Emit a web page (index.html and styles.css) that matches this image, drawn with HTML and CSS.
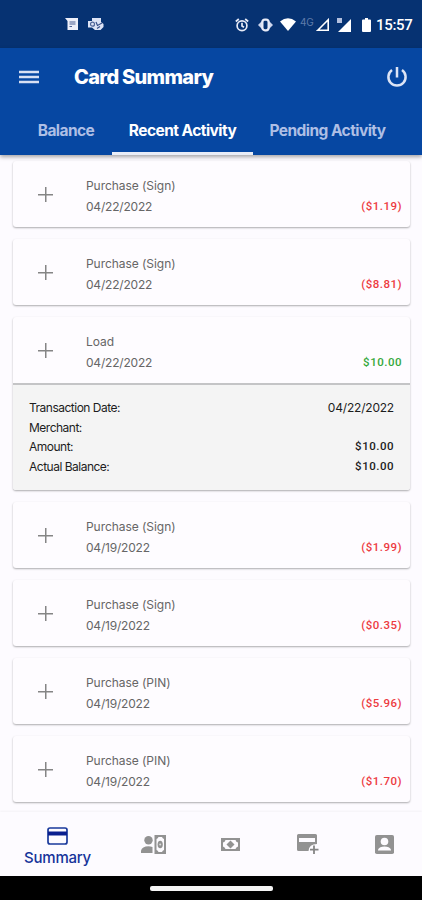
FILE: index.html
```html
<!DOCTYPE html>
<html lang="en">
<head>
    <meta charset="UTF-8">
    <meta name="viewport" content="width=device-width, initial-scale=1">
    <title>Card Summary</title>
    <link rel="stylesheet" href="styles.css">
</head>
<body>
    <div class="status-bar">
        <div class="notifications">
            <svg width="14" height="13" viewBox="0 0 14 13"><path fill="#eef0fa" d="M0 0h13v12H2.500V3z"/><path stroke="#4a5f92" stroke-width="1.200" d="M4.500 4h6M4.500 6h6M4.500 8.500h2.500"/></svg>
            <svg width="16" height="13" viewBox="0 0 16 13"><path fill="#dde3f5" d="M4 0h9v4l2.500 2v3l-3 3H7L4 9.500H0V3h4z"/><circle cx="4.500" cy="6.200" r="2" fill="none" stroke="#506699" stroke-width="1.200"/><path fill="none" stroke="#385089" stroke-width="1.200" d="M8 4l1.500 3.500L14 5M9 10.500l3-2"/></svg>
        </div>
        <svg class="alarm" width="14" height="14" viewBox="0 0 14 14"><g fill="none" stroke="#e8ebf7" stroke-width="1.700"><circle cx="7" cy="7.700" r="4.900"/><path d="M.8 3.500L3.800 1M13.200 3.500l-3-2.500M7 4.700V8l2 1.300"/></g></svg>
        <svg class="vibrate" width="15" height="14" viewBox="0 0 15 14"><path fill="#cdd6ee" d="M0 7l4-4v8zM15 7l-4-4v8z"/><rect x="4.400" y="1.700" width="6.200" height="10.600" rx="2.500" fill="none" stroke="#e8ebf7" stroke-width="2.200"/></svg>
        <svg class="wifi" width="16" height="13" viewBox="0 0 16 13"><path fill="#fff" d="M0 3.500Q8-3 16 3.500L8 13z"/></svg>
        <span class="network">4G</span>
        <svg class="signal" width="13" height="13" viewBox="0 0 13 13"><path fill="none" stroke="#fff" stroke-width="1.600" d="M1.800 12.200L12.200 1.800v10.400z"/></svg>
        <svg class="signal-two" width="15" height="14" viewBox="0 0 15 14"><path fill="#fff" d="M1 14L14 1v13z"/><path fill="#b4c0de" d="M0 0h5v5H0z"/></svg>
        <svg class="battery" width="9" height="14" viewBox="0 0 9 14"><path fill="#fff" d="M3 0h3v1.500h2q1 0 1 1V13q0 1-1 1H1q-1 0-1-1V2.500q0-1 1-1h2z"/></svg>
        <span class="clock">15:57</span>
    </div>

    <header class="header">
        <div class="title-row">
            <svg width="20" height="14" viewBox="0 0 20 14"><path stroke="#d8e0f3" stroke-width="2.400" d="M0 2h20M0 7h20M0 12h20"/></svg>
            <h1>Card Summary</h1>
            <svg width="22" height="22" viewBox="0 0 22 22"><path fill="none" stroke="#dce4f5" stroke-width="2.500" d="M11 1v10.500M6 4a8.600 8.600 0 1 0 10 0"/></svg>
        </div>
        <nav class="tabs">
            <a class="tab tab-balance">Balance</a>
            <a class="tab tab-recent active">Recent Activity</a>
            <a class="tab tab-pending">Pending Activity</a>
        </nav>
    </header>

    <main class="activity">
        <div class="card">
            <div class="row">
                <span class="plus"></span>
                <div class="info"><p>Purchase (Sign)</p><p class="date">04/22/2022</p></div>
                <span class="amount">($1.19)</span>
            </div>
        </div>
        <div class="card">
            <div class="row">
                <span class="plus"></span>
                <div class="info"><p>Purchase (Sign)</p><p class="date">04/22/2022</p></div>
                <span class="amount">($8.81)</span>
            </div>
        </div>
        <div class="card">
            <div class="row">
                <span class="plus"></span>
                <div class="info"><p>Load</p><p class="date">04/22/2022</p></div>
                <span class="amount credit">$10.00</span>
            </div>
            <div class="details">
                <div class="line"><span>Transaction Date:</span><span class="detail-date">04/22/2022</span></div>
                <div class="line"><span>Merchant:</span></div>
                <div class="line"><span>Amount:</span><span class="value">$10.00</span></div>
                <div class="line"><span>Actual Balance:</span><span class="value">$10.00</span></div>
            </div>
        </div>
        <div class="card">
            <div class="row">
                <span class="plus"></span>
                <div class="info"><p>Purchase (Sign)</p><p class="date">04/19/2022</p></div>
                <span class="amount">($1.99)</span>
            </div>
        </div>
        <div class="card">
            <div class="row">
                <span class="plus"></span>
                <div class="info"><p>Purchase (Sign)</p><p class="date">04/19/2022</p></div>
                <span class="amount">($0.35)</span>
            </div>
        </div>
        <div class="card">
            <div class="row">
                <span class="plus"></span>
                <div class="info"><p>Purchase (PIN)</p><p class="date">04/19/2022</p></div>
                <span class="amount">($5.96)</span>
            </div>
        </div>
        <div class="card">
            <div class="row">
                <span class="plus"></span>
                <div class="info"><p>Purchase (PIN)</p><p class="date">04/19/2022</p></div>
                <span class="amount">($1.70)</span>
            </div>
        </div>
    </main>

    <nav class="bottom-nav">
        <a class="nav-item selected">
            <svg width="21" height="18" viewBox="0 0 21 18"><rect x="1" y="1" width="19" height="16" rx="2" fill="none" stroke="#1a3a9c" stroke-width="1.700"/><path fill="#0a1f8f" d="M1 4.500h19v4H1z"/></svg>
            <span>Summary</span>
        </a>
        <a class="nav-item">
            <svg width="25" height="19" viewBox="0 0 25 19"><g fill="#929292"><circle cx="7.500" cy="5.300" r="4.200"/><path d="M0 18v-2.500Q1 11.500 7.500 11.300q2 0 4 .8V18z"/><path fill-rule="evenodd" d="M13.500 0H25v19H13.500zM15.500 4v11q1.500.5 2 2h3.500q.5-1.500 2-2V4q-1.500-.5-2-2h-3.500q-.5 1.500-2 2z"/><ellipse cx="19.200" cy="9.500" rx="2.600" ry="3.800"/></g><circle cx="19.200" cy="9.500" r="1" fill="#ddd"/></svg>
        </a>
        <a class="nav-item">
            <svg width="19" height="13" viewBox="0 0 19 13"><path fill="#929292" fill-rule="evenodd" d="M0 0h19v13H0zM4.500 2Q4 4 2 4.500v4q2 .5 2.500 2.500h10q.5-2 2.500-2.500v-4Q15 4 14.500 2z"/><path fill="#929292" d="M9.500 2.500l4 4-4 4-4-4z"/></svg>
        </a>
        <a class="nav-item">
            <svg width="22" height="20" viewBox="0 0 22 20"><path fill="#929292" fill-rule="evenodd" d="M1.500 0h17Q20 0 20 1.500V10q-8 0-8.500 7h-10Q0 17 0 15.500v-14Q0 0 1.500 0zM2 4v4h16V4z"/><path stroke="#858585" stroke-width="1.800" d="M17 11.500V20M13 15.700h8.500"/></svg>
        </a>
        <a class="nav-item">
            <svg width="19" height="19" viewBox="0 0 19 19"><rect width="19" height="19" rx="1.800" fill="#929292"/><circle cx="9.500" cy="6.500" r="3.800" fill="#fdfbff"/><path fill="#fdfbff" d="M3 15.500v-1Q4.500 11.500 9.500 11.500T16 14.500v1z"/></svg>
        </a>
    </nav>
    <div class="gesture-bar"><span></span></div>
</body>
</html>
```

FILE: styles.css
```css
* {
    box-sizing: border-box;
}
body {
    margin: 0;
    height: 900px;
    display: flex;
    flex-direction: column;
    overflow: hidden;
    font-family: Inter, "Liberation Sans", sans-serif;
    background-color: #fdfbff;
}
svg {
    display: block;
    flex: none;
}
h1, p {
    margin: 0;
}

/* status bar */
.status-bar {
    height: 48px;
    flex: none;
    display: flex;
    align-items: center;
    padding: 1px 10px 0 65px;
    background-color: #063272;
    color: #fff;
}
.notifications {
    display: flex;
    gap: 9px;
    margin-right: auto;
}
.vibrate {
    margin-left: 9px;
}
.wifi {
    margin-left: 7px;
}
.network {
    width: 14px;
    margin: -5px 2px 0 4px;
    font-size: 10px;
    line-height: 12px;
    letter-spacing: -0.3px;
    color: #5f7bab;
}
.signal-two {
    margin-left: 8px;
}
.battery {
    margin-left: 10px;
}
.clock {
    width: 36px;
    margin-left: 5px;
    font: 500 15px/20px Roboto, sans-serif;
    letter-spacing: -0.3px;
    white-space: nowrap;
}

/* header and tabs */
.header {
    height: 107px;
    flex: none;
    position: relative;
    background-color: #0647a2;
    box-shadow: 0 2px 4px rgba(0, 0, 0, 0.35);
}
.title-row {
    height: 58px;
    display: flex;
    align-items: center;
    padding: 0 14px 0 19px;
}
.title-row h1 {
    margin: 0 auto 0 35px;
    font-size: 20px;
    font-weight: 800;
    letter-spacing: -0.7px;
    color: #fff;
}
.tabs {
    height: 49px;
    display: flex;
}
.tab {
    display: flex;
    justify-content: center;
    border-bottom: 3px solid transparent;
    font-size: 15.5px;
    font-weight: 700;
    line-height: 49px;
    letter-spacing: -0.55px;
    white-space: nowrap;
    color: #aebfe5;
}
.tab-balance {
    width: 92px;
    margin-left: 20px;
}
.tab-recent {
    width: 141px;
}
.tab-pending {
    width: 149px;
}
.tab.active {
    color: #fff;
    border-bottom-color: #e9edf7;
}

/* transactions */
.activity {
    flex: 1;
    display: flex;
    flex-direction: column;
    gap: 12px;
    padding: 6px 12px 0 13px;
}
.card {
    flex: none;
    border-radius: 3px;
    background-color: #fefcff;
    box-shadow: 0 1px 2px rgba(0, 0, 0, 0.32);
}
.row {
    height: 66px;
    display: flex;
    padding-right: 8px;
}
.plus {
    width: 15px;
    height: 15px;
    margin: 26px 33px 0 25px;
    background:
        linear-gradient(#858585, #858585) center / 15px 1.5px no-repeat,
        linear-gradient(#858585, #858585) center / 1.5px 15px no-repeat;
}
.info {
    padding-top: 14px;
    font-size: 12px;
    line-height: 21px;
    letter-spacing: -0.05px;
    color: #666;
}
.date {
    letter-spacing: -0.2px;
}
.amount {
    margin: 35px 0 0 auto;
    font: 500 11.5px/21px Roboto, sans-serif;
    letter-spacing: 0.5px;
    color: #ed3b3f;
}
.amount.credit {
    color: #36a83c;
}
.details {
    height: 107px;
    padding: 13px 16px 0 16px;
    border-top: 2px solid #c4c4c6;
    border-radius: 0 0 3px 3px;
    background-color: #f4f4f4;
}
.line {
    display: flex;
    justify-content: space-between;
    font-size: 12px;
    line-height: 19.5px;
    letter-spacing: -0.5px;
    color: #1d1d1d;
}
.detail-date {
    letter-spacing: -0.2px;
}
.value {
    font-family: Roboto, sans-serif;
    font-size: 11.5px;
    font-weight: 500;
    letter-spacing: 0.5px;
}

/* bottom navigation */
.bottom-nav {
    height: 64px;
    flex: none;
    display: grid;
    grid-template-columns: 115px 77px 77px 77px 76px;
    background-color: #fdfbff;
    box-shadow: 0 -1px 2px rgba(0, 0, 0, 0.04);
}
.nav-item {
    display: flex;
    flex-direction: column;
    align-items: center;
    justify-content: center;
}
.selected {
    justify-content: flex-start;
    padding-top: 15px;
    font-size: 15px;
    font-weight: 500;
    line-height: 22px;
    letter-spacing: -0.25px;
    color: #16349a;
}
.selected span {
    margin-top: 2px;
}
.gesture-bar {
    height: 24px;
    flex: none;
    display: flex;
    justify-content: center;
    padding-top: 10px;
    background-color: #000;
}
.gesture-bar span {
    width: 123px;
    height: 5px;
    border-radius: 2px;
    background-color: #f5f5f5;
}
```
